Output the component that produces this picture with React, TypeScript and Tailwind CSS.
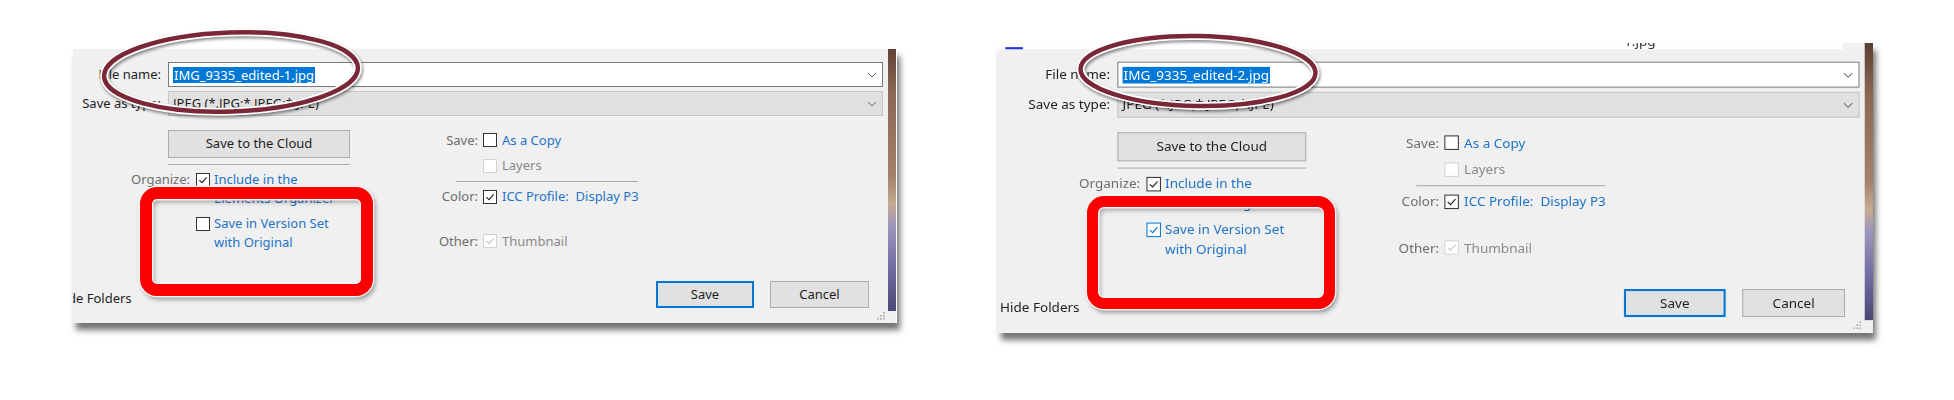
import React from "react";

function Box({ checked = false, disabled = false, blue = false }: { checked?: boolean; disabled?: boolean; blue?: boolean }) {
  const border = disabled ? "border-[#d2d2d2]" : blue ? "border-[#0078d7]" : "border-[#333333]";
  const stroke = disabled ? "#c4c4c4" : blue ? "#0078d7" : "#222222";
  return (
    <span className={`flex h-[14px] w-[14px] shrink-0 items-center justify-center border bg-white ${border}`}>
      {checked && (
        <svg width="10" height="10" viewBox="0 0 10 10" fill="none">
          <path d="M1.3 5.2 L4 7.7 L8.7 2.3" stroke={stroke} strokeWidth="1.1" />
        </svg>
      )}
    </span>
  );
}

function Chevron() {
  return (
    <svg width="10" height="6" viewBox="0 0 10 6" fill="none">
      <path d="M1 1 L5 5 L9 1" stroke="#6b6b6b" strokeWidth="1" />
    </svg>
  );
}

function Option({ label, text, checked, disabled, blueText = true }: { label?: string; text: string; checked?: boolean; disabled?: boolean; blueText?: boolean }) {
  return (
    <div className="flex items-start leading-[19px]">
      <span className="w-[75px] text-right text-[#6d6d6d]">{label}</span>
      <span className="ml-[5px] mt-[2.5px]">
        <Box checked={checked} disabled={disabled} />
      </span>
      <span className={`ml-[5px] whitespace-pre ${blueText ? "text-[#1f73c8]" : "text-[#8a8a8a]"}`}>{text}</span>
    </div>
  );
}

function Dialog({ name, versionChecked, listEdge }: { name: string; versionChecked: boolean; listEdge: boolean }) {
  return (
    <div className="flex h-[279px] w-[843px] bg-[#f0f0f0] font-['Noto_Sans',sans-serif] text-[13px] text-[#1e1e1e]">
      <div className="flex w-[835px] flex-col">
        {/* bottom edge of the file list above */}
        {listEdge ? (
          <div className="flex h-[6px] w-[814px] overflow-hidden bg-white">
            <span className="ml-[7px] mt-[4px] h-[3px] w-[17px] bg-[#2335d8]" />
            <span className="ml-[575px] -mt-[9px] leading-[14px] text-[#333]">-1.jpg</span>
          </div>
        ) : (
          <div className="h-[6px]" />
        )}

        <div className="mt-[12px] flex items-center">
          <span className="w-[108px] text-right">File name:</span>
          <div className="ml-[7px] flex h-[25px] w-[715px] items-center justify-between border border-[#7a7a7a] bg-white pl-[4px] pr-[5px]">
            <span className="bg-[#0078d7] px-px leading-[16px] text-white">{name}</span>
            <Chevron />
          </div>
        </div>

        <div className="mt-[4px] flex items-center">
          <span className="w-[108px] text-right">Save as type:</span>
          <div className="ml-[7px] flex h-[25px] w-[715px] items-center justify-between border border-[#c6c6c6] bg-[#e0e0e0] pl-[4px] pr-[5px]">
            <span className="text-[#222]">JPEG (*.JPG;*.JPEG;*.JPE)</span>
            <Chevron />
          </div>
        </div>

        <div className="mt-[14px] flex">
          <div className="flex w-[350px] flex-col">
            <div className="ml-[115px] flex h-[28px] w-[182px] items-center justify-center border border-[#adadad] bg-[#e1e1e1]">
              Save to the Cloud
            </div>
            <div className="ml-[115px] mt-[6px] h-px w-[182px] bg-[#a9a9a9]" />
            <div className="mt-[5px] flex items-start leading-[19px]">
              <span className="w-[137px] text-right text-[#6d6d6d]">Organize:</span>
              <span className="ml-[6px] mt-[2.5px]">
                <Box checked />
              </span>
              <span className="ml-[4px] text-[#1f73c8]">
                Include in the
                <br />
                Elements Organizer
              </span>
            </div>
            <div className="ml-[143px] mt-[5.5px] flex items-start leading-[19px]">
              <span className="mt-[3px]">
                <Box checked={versionChecked} blue={versionChecked} />
              </span>
              <span className="ml-[4px] text-[#1f73c8]">
                Save in Version Set
                <br />
                with Original
              </span>
            </div>
          </div>

          <div className="mt-[0.5px] flex flex-col">
            <Option label="Save:" text="As a Copy" />
            <div className="mt-[6.5px]">
              <Option text="Layers" disabled blueText={false} />
            </div>
            <div className="ml-[53px] mt-[6px] h-px w-[182px] bg-[#a9a9a9]" />
            <div className="mt-[5px]">
              <Option label="Color:" text="ICC Profile:  Display P3" checked />
            </div>
            <div className="mt-[25.5px]">
              <Option label="Other:" text="Thumbnail" checked disabled blueText={false} />
            </div>
          </div>
        </div>

        <div className="mt-[29.5px] flex items-start justify-between pr-[19px]">
          <span className="ml-[2px] mt-[7.5px] leading-[19px]">Hide Folders</span>
          <div className="flex gap-[16px]">
            <div className="flex h-[27px] w-[98px] items-center justify-center border-2 border-[#0078d7] bg-[#e1e1e1]">Save</div>
            <div className="flex h-[27px] w-[99px] items-center justify-center border border-[#adadad] bg-[#e1e1e1]">Cancel</div>
          </div>
        </div>

        <div className="mt-[4px] flex justify-end pr-[3px]">
          <svg width="8" height="8" viewBox="0 0 8 8" fill="#a8a8a8">
            <rect x="6" y="0" width="1.6" height="1.6" />
            <rect x="3" y="3" width="1.6" height="1.6" />
            <rect x="6" y="3" width="1.6" height="1.6" />
            <rect x="0" y="6" width="1.6" height="1.6" />
            <rect x="3" y="6" width="1.6" height="1.6" />
            <rect x="6" y="6" width="1.6" height="1.6" />
          </svg>
        </div>
      </div>

      {/* sliver of the photo behind the dialog */}
      <div className="h-[267px] w-[8px] bg-[linear-gradient(to_bottom,#5b3f33_0%,#8a6753_18%,#a5826b_50%,#c4ab92_60%,#9d96bd_68%,#6f6aa0_85%,#4b4874_100%)]" />
    </div>
  );
}

function Ring({ w, h, rx, ry, rot, className }: { w: number; h: number; rx: number; ry: number; rot: number; className: string }) {
  const t = `rotate(${rot} ${w / 2} ${h / 2})`;
  return (
    <svg
      width={w}
      height={h}
      viewBox={`0 0 ${w} ${h}`}
      className={`pointer-events-none absolute drop-shadow-[1px_2px_1.5px_rgba(0,0,0,0.45)] ${className}`}
    >
      <ellipse cx={w / 2} cy={h / 2} rx={rx} ry={ry} fill="none" stroke="#ffffff" strokeWidth={8} transform={t} />
      <ellipse cx={w / 2} cy={h / 2} rx={rx} ry={ry} fill="none" stroke="#7a2838" strokeWidth={4.5} transform={t} />
    </svg>
  );
}

export default function App() {
  return (
    <div className="flex h-[400px] w-[1954px] items-start overflow-hidden bg-white">
      {/* before: version set unchecked */}
      <div className="relative ml-[73px] mt-[49px] shrink-0">
        <div className="h-[274px] w-[824px] overflow-hidden shadow-[3px_7px_6px_rgba(0,0,0,0.55)]">
          <div className="-ml-[20px] -mt-[5px]">
            <Dialog name="IMG_9335_edited-1.jpg" versionChecked={false} listEdge={false} />
          </div>
        </div>
        <Ring w={290} h={110} rx={127} ry={39.5} rot={-2} className="left-[13px] -top-[32px]" />
        <div className="absolute left-[67px] top-[138px] h-[109px] w-[233px] rounded-[17px] border-[12px] border-[#fb0000] shadow-[0_0_0_1.5px_#f4f4f4,2px_3px_5px_rgba(0,0,0,0.45),inset_0_0_0_1.5px_#f4f4f4,inset_2px_3px_5px_rgba(0,0,0,0.35)]" />
      </div>

      {/* after: version set checked */}
      <div className="relative ml-[101px] mt-[43px] shrink-0">
        <div className="h-[290px] w-[875px] overflow-hidden shadow-[3px_7px_6px_rgba(0,0,0,0.55)]">
          <div className="origin-top-left scale-[1.038]">
            <Dialog name="IMG_9335_edited-2.jpg" versionChecked listEdge />
          </div>
        </div>
        <Ring w={270} h={100} rx={117.5} ry={35} rot={1} className="left-[65px] -top-[22px]" />
        <div className="absolute left-[89px] top-[153px] h-[113px] w-[248px] rounded-[17px] border-[11px] border-[#fb0000] shadow-[0_0_0_1.5px_#f4f4f4,2px_3px_5px_rgba(0,0,0,0.45),inset_0_0_0_1.5px_#f4f4f4,inset_2px_3px_5px_rgba(0,0,0,0.35)]" />
      </div>
    </div>
  );
}
